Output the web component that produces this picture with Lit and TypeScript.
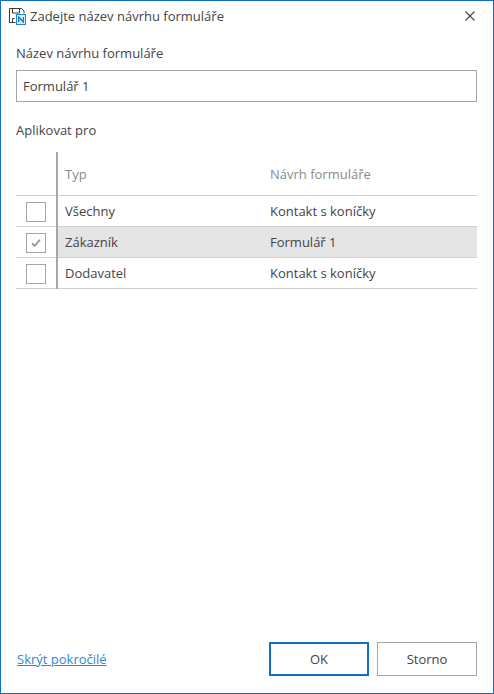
import { LitElement, html, css } from 'lit';
import { customElement } from 'lit/decorators.js';

const ROWS = [
  { type: 'Všechny', form: 'Kontakt s koníčky', checked: false },
  { type: 'Zákazník', form: 'Formulář 1', checked: true },
  { type: 'Dodavatel', form: 'Kontakt s koníčky', checked: false },
];

@customElement('app-root')
export class AppRoot extends LitElement {
  render() {
    return html`
      <div class="window">
        <header class="titlebar">
          <svg class="app-icon" width="17" height="17" viewBox="0 0 17 17" fill="none">
            <path d="M6.5 14.5H.5V.5h12l2.5 2.5v2.5" stroke="#3a3a3a"/>
            <path d="M3.5 .5v4.5h7V.5M3.5 14.5v-4h2" stroke="#3a3a3a"/>
            <rect x="7.5" y="6.5" width="9" height="10" fill="#d8ecfa" stroke="#1e88d0"/>
            <path d="M9.7 14V9L14.3 14V9" stroke="#1170c0" stroke-width="1.2"/>
          </svg>
          <span class="title">Zadejte název návrhu formuláře</span>
          <svg class="close" width="10" height="10" viewBox="0 0 10 10">
            <path d="M.5 .5l9 9M9.5 .5l-9 9" stroke="#444" stroke-width="1.1"/>
          </svg>
        </header>

        <main class="body">
          <label class="field-label">Název návrhu formuláře</label>
          <div class="input">Formulář 1</div>
          <div class="section-label">Aplikovat pro</div>

          <div class="table">
            <div class="row head">
              <div class="check-cell"></div>
              <div class="cell">Typ</div>
              <div class="cell">Návrh formuláře</div>
            </div>
            ${ROWS.map(r => html`
              <div class="row ${r.checked ? 'selected' : ''}">
                <div class="check-cell">
                  <span class="checkbox">
                    ${r.checked ? html`
                      <svg width="12" height="10" viewBox="0 0 12 10" fill="none">
                        <path d="M2 5.2L4.6 7.8l5.4-6" stroke="#8a8a8a" stroke-width="1.6"/>
                      </svg>` : ''}
                  </span>
                </div>
                <div class="cell">${r.type}</div>
                <div class="cell">${r.form}</div>
              </div>
            `)}
          </div>
        </main>

        <footer class="footer">
          <a class="link">Skrýt pokročilé</a>
          <div class="buttons">
            <button class="btn primary">OK</button>
            <button class="btn">Storno</button>
          </div>
        </footer>
      </div>
    `;
  }

  static styles = css`
    :host {
      display: block;
      font-family: 'Open Sans', 'Noto Sans', sans-serif;
      font-size: 13px;
      color: #444;
    }
    .window {
      box-sizing: border-box;
      width: 494px;
      height: 694px;
      border: 1px solid #0f6fc0;
      background: #fff;
      display: flex;
      flex-direction: column;
    }
    .titlebar {
      height: 30px;
      padding: 0 18px 0 8px;
      display: flex;
      align-items: center;
      flex: none;
    }
    .app-icon {
      margin-right: 4px;
    }
    .title {
      flex: 1;
    }
    .body {
      flex: 1;
      padding: 13px 16px 0 15px;
      display: flex;
      flex-direction: column;
    }
    .field-label {
      line-height: 18px;
      margin-bottom: 8px;
    }
    .input {
      box-sizing: border-box;
      height: 32px;
      border: 1px solid #a6a6a6;
      padding: 0 6px;
      line-height: 30px;
    }
    .section-label {
      line-height: 18px;
      margin-top: 19px;
      margin-bottom: 13px;
    }
    .table {
      display: flex;
      flex-direction: column;
    }
    .row {
      display: grid;
      grid-template-columns: 42px 205px 1fr;
      height: 31px;
      box-sizing: border-box;
      border-bottom: 1px solid #d0d0d0;
      align-items: stretch;
    }
    .row.head {
      height: 44px;
      color: #8a8a8a;
    }
    .check-cell {
      box-sizing: border-box;
      border-right: 2px solid #a6a6a6;
      margin-bottom: -1px;
      display: flex;
      align-items: center;
      padding-left: 10px;
    }
    .cell {
      display: flex;
      align-items: center;
      padding-left: 7px;
    }
    .row.selected .cell {
      background: #e5e5e5;
    }
    .checkbox {
      box-sizing: border-box;
      width: 20px;
      height: 20px;
      border: 1px solid #a6a6a6;
      display: flex;
      align-items: center;
      justify-content: center;
      background: #fff;
    }
    .footer {
      flex: none;
      padding: 0 16px 17px 16px;
      display: flex;
      align-items: center;
      justify-content: space-between;
    }
    .link {
      color: #2b88d8;
      text-decoration: underline;
    }
    .buttons {
      display: flex;
      gap: 8px;
    }
    .btn {
      box-sizing: border-box;
      width: 100px;
      height: 34px;
      border: 1px solid #a6a6a6;
      background: #fff;
      font: inherit;
      color: inherit;
      padding: 0;
    }
    .btn.primary {
      border: 2px solid #0f6fc0;
    }
  `;
}
